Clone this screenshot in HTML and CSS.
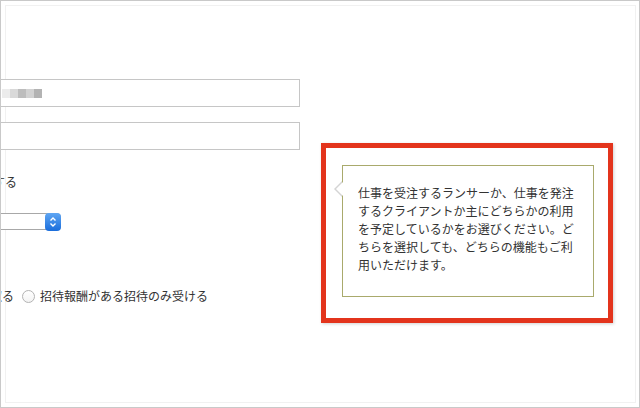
FILE: index.html
```html
<!DOCTYPE html>
<html lang="ja">
<head>
<meta charset="utf-8">
<link rel="stylesheet" href="styles.css">
</head>
<body>
<div class="page">
  <div class="form">
    <div class="field">
      <span class="mosaic"><i class="m1"></i><i class="m2"></i><i class="m3"></i><i class="m4"></i><i class="m5"></i></span>
    </div>
    <div class="field field-2"></div>
    <div class="label">受付する</div>
    <div class="select">
      <svg class="select-btn" width="16" height="18" viewBox="0 0 16 18">
        <defs>
          <linearGradient id="g" x1="0" y1="0" x2="0" y2="1">
            <stop offset="0" stop-color="#5fa6f3"/>
            <stop offset="1" stop-color="#1a6ddb"/>
          </linearGradient>
        </defs>
        <rect x="0" y="0" width="16" height="18" rx="4" fill="url(#g)"/>
        <polyline points="5.5,7.5 8,5 10.5,7.5" fill="none" stroke="#fff" stroke-width="1.4"/>
        <polyline points="5.5,10.5 8,13 10.5,10.5" fill="none" stroke="#fff" stroke-width="1.4"/>
      </svg>
    </div>
    <div class="radio-row">
      <span class="opt">受け取る</span>
      <span class="radio"></span>
      <span class="opt">招待報酬がある招待のみ受ける</span>
    </div>
  </div>
  <div class="callout">
    <div class="tip">
      <span class="arrow"></span>
      <p class="tip-text">仕事を受注するランサーか、仕事を発注するクライアントか主にどちらかの利用を予定しているかをお選びください。どちらを選択しても、どちらの機能もご利用いただけます。</p>
    </div>
  </div>
</div>
</body>
</html>
```
FILE: styles.css
```css
html, body {
  margin: 0;
  padding: 0;
  background: #fff;
}
body {
  font-family: "Noto Sans CJK JP", "Liberation Sans", sans-serif;
  color: #333;
}
.page {
  width: 640px;
  height: 408px;
  box-sizing: border-box;
  border: 1px solid #c9c9c9;
  position: relative;
  overflow: hidden;
  display: flex;
  align-items: flex-start;
  background: #fff;
}
.page::before {
  content: "";
  position: absolute;
  left: 4px;
  top: 4px;
  right: 3px;
  bottom: 4px;
  border: 1px solid #f1f1f1;
  pointer-events: none;
}
.form {
  position: relative;
  margin-left: -199px;
  width: 498px;
  flex: none;
  padding-top: 78px;
  display: flex;
  flex-direction: column;
  align-items: flex-start;
}
.field {
  width: 100%;
  height: 28px;
  box-sizing: border-box;
  border: 1px solid #c6c6c6;
  background: #fff;
  display: flex;
  align-items: center;
}
.field-2 {
  margin-top: 15px;
}
.mosaic {
  display: flex;
  margin-left: 199px;
}
.mosaic i {
  display: block;
  width: 8px;
  height: 9px;
}
.mosaic .m1 { background: #ececec; }
.mosaic .m2 { background: #d9d9d9; }
.mosaic .m3 { background: #bdbdbd; }
.mosaic .m4 { background: #d2d2d2; }
.mosaic .m5 { background: #b3b3b3; }
.label {
  margin-top: 23px;
  padding-left: 167px;
  font-size: 12px;
  line-height: 18px;
}
.select {
  margin-top: 22px;
  width: 259px;
  height: 17px;
  box-sizing: border-box;
  border: 1px solid #a8a8a8;
  border-radius: 4px;
  background: #fff;
  position: relative;
}
.select-btn {
  position: absolute;
  right: -1px;
  top: -1px;
}
.radio-row {
  margin-top: 57px;
  padding-left: 164px;
  display: flex;
  align-items: center;
  font-size: 12px;
  line-height: 18px;
  white-space: nowrap;
}
.radio {
  width: 11px;
  height: 11px;
  border: 1px solid #b3b3b3;
  border-radius: 50%;
  background: linear-gradient(#fff, #f3f3f3);
  margin-left: 8px;
  margin-right: 5px;
  flex: none;
}
.callout {
  flex: none;
  margin-left: 21px;
  margin-top: 142px;
  width: 292px;
  height: 180px;
  box-sizing: border-box;
  border: 5px solid #e3341c;
  box-shadow: 1px 1px 3px rgba(0, 0, 0, 0.18);
  padding-top: 17px;
  padding-left: 16px;
}
.tip {
  position: relative;
  width: 252px;
  height: 132px;
  box-sizing: border-box;
  border: 1px solid #a9aa6c;
  background: #fff;
  padding: 18px 19px 0 15px;
}
.arrow {
  position: absolute;
  left: -9px;
  top: 15px;
  width: 0;
  height: 0;
  border-top: 8px solid transparent;
  border-bottom: 8px solid transparent;
  border-right: 8px solid #d4d4d4;
}
.arrow::after {
  content: "";
  position: absolute;
  left: 2px;
  top: -7px;
  width: 0;
  height: 0;
  border-top: 7px solid transparent;
  border-bottom: 7px solid transparent;
  border-right: 7px solid #fff;
}
.tip-text {
  margin: 0;
  width: 217px;
  font-size: 12px;
  line-height: 18px;
  color: #333;
}
```
